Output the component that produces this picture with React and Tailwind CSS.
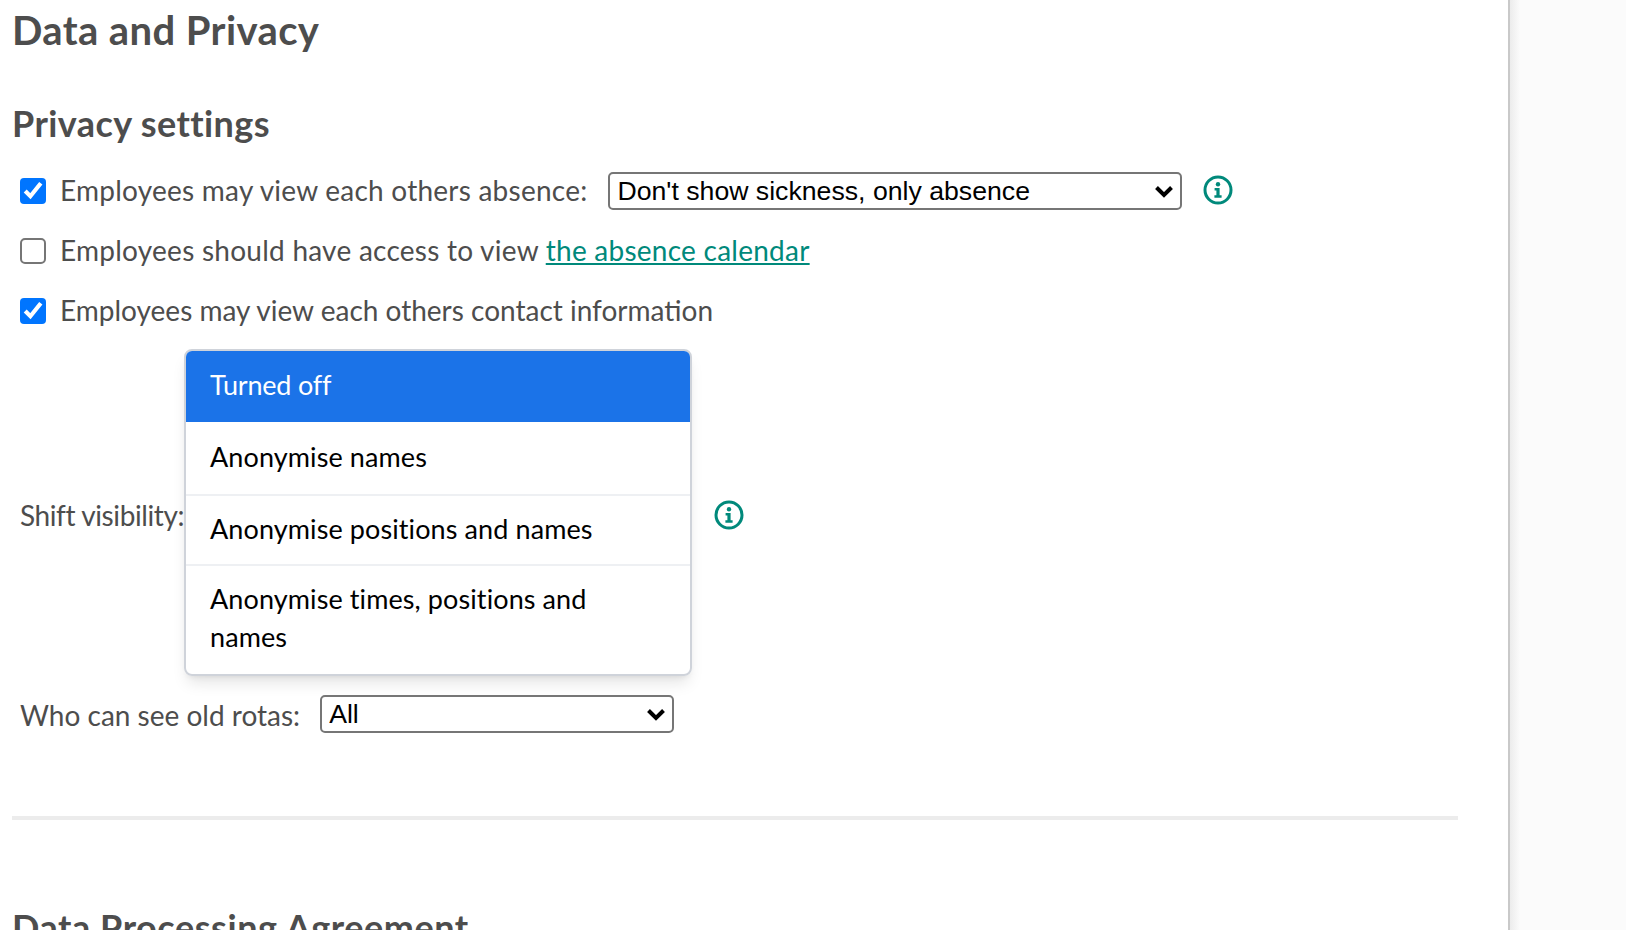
import React from 'react';

function InfoIcon() {
    return (
        <svg width="30" height="30" viewBox="0 0 30 30" fill="none" className="shrink-0">
            <circle cx="15" cy="15" r="13" stroke="#00897b" strokeWidth="3" />
            <circle cx="15" cy="9.2" r="2.2" fill="#00897b" />
            <path d="M11.6 13h5v7.2h2v2.6h-7.2v-2.6h2v-4.6h-1.8z" fill="#00897b" />
        </svg>
    );
}

function NativeSelect({ value, className }) {
    return (
        <div className={`relative shrink-0 h-[38px] ${className}`}>
            <select className="block appearance-none w-full h-full border-2 border-[#767676] rounded-[5px] pl-[7px] text-[26.67px] leading-[30px] text-black font-['Liberation_Sans',sans-serif]">
                <option>{value}</option>
            </select>
            <svg width="20" height="14" viewBox="0 0 20 14" fill="none" className="absolute right-[8px] top-[13px] pointer-events-none">
                <path d="M2.5 2.5L10 10l7.5-7.5" stroke="#000" strokeWidth="4" />
            </svg>
        </div>
    );
}

function CheckRow({ checked, children }) {
    return (
        <div className="flex items-center h-[60px] pl-[8px]">
            <input type="checkbox" defaultChecked={checked} className="[zoom:2] w-[13px] h-[13px] m-0 mt-[1px] shrink-0" />
            <div className="ml-[14px] flex items-center">{children}</div>
        </div>
    );
}

const options = [
    { label: 'Anonymise names', cls: 'pt-[16px] pb-[18px] border-b-2 border-[#eef0f3]' },
    { label: 'Anonymise positions and names', cls: 'pt-[14px] pb-[16px] border-b-2 border-[#eef0f3]' },
    { label: 'Anonymise times, positions and names', cls: 'pt-[14px] pb-[18px]' },
];

export default function App() {
    return (
        <div className="flex h-[930px] overflow-hidden bg-white font-['Lato',sans-serif] text-[#4d4d4d]">
            <main className="w-[1510px] shrink-0 border-r-2 border-[#c9c9c9] pl-[12px] pr-[50px]">
                <h1 className="text-[40px] font-bold tracking-[0.4px] leading-[44px] mt-[8px]">Data and Privacy</h1>
                <h2 className="text-[36px] font-bold tracking-[0.4px] leading-[40px] mt-[51px]">Privacy settings</h2>

                <div className="mt-[17px] text-[28px]">
                    <CheckRow checked>
                        <span className="tracking-[0.24px]">Employees may view each others absence:</span>
                        <NativeSelect value="Don't show sickness, only absence" className="ml-[21px] mt-[2px] w-[574px]" />
                        <span className="ml-[21px] flex"><InfoIcon /></span>
                    </CheckRow>
                    <CheckRow>
                        <span className="tracking-[0.25px]">Employees should have access to view <a href="#" className="text-[#00897b] underline">the absence calendar</a></span>
                    </CheckRow>
                    <CheckRow checked>
                        <span>Employees may view each others contact information</span>
                    </CheckRow>

                    <div className="flex items-center mt-[9px] pl-[8px]">
                        <span className="w-[164px] mt-[4px] shrink-0 whitespace-nowrap tracking-[-0.4px]">Shift visibility:</span>
                        <div className="w-[508px] border-2 border-[#cfd3da] rounded-[8px] overflow-hidden shadow-lg text-black text-[27px] tracking-[0.1px]">
                            <div className="pt-[15px] pb-[18px] px-[24px] leading-[38px] tracking-[-0.2px] bg-[#1b73e8] text-white">Turned off</div>
                            {options.map(o => (
                                <div key={o.label} className={`px-[24px] leading-[38px] ${o.cls}`}>{o.label}</div>
                            ))}
                        </div>
                        <span className="ml-[22px] mt-[4px] flex"><InfoIcon /></span>
                    </div>

                    <div className="flex items-center mt-[15px] pl-[8px]">
                        <span className="mt-[3px]">Who can see old rotas:</span>
                        <NativeSelect value="All" className="ml-[20px] w-[354px]" />
                    </div>
                </div>

                <hr className="mt-[80px] h-[4px] border-0 bg-[#ececec]" />

                <h2 className="text-[36px] font-bold tracking-[0.55px] leading-[40px] mt-[87px]">Data Processing Agreement</h2>
            </main>
            <aside className="flex-1 bg-[#fbfbfb]">
                <div className="w-[10px] h-full bg-gradient-to-r from-[#ececec] to-[#fbfbfb]" />
            </aside>
        </div>
    );
}
